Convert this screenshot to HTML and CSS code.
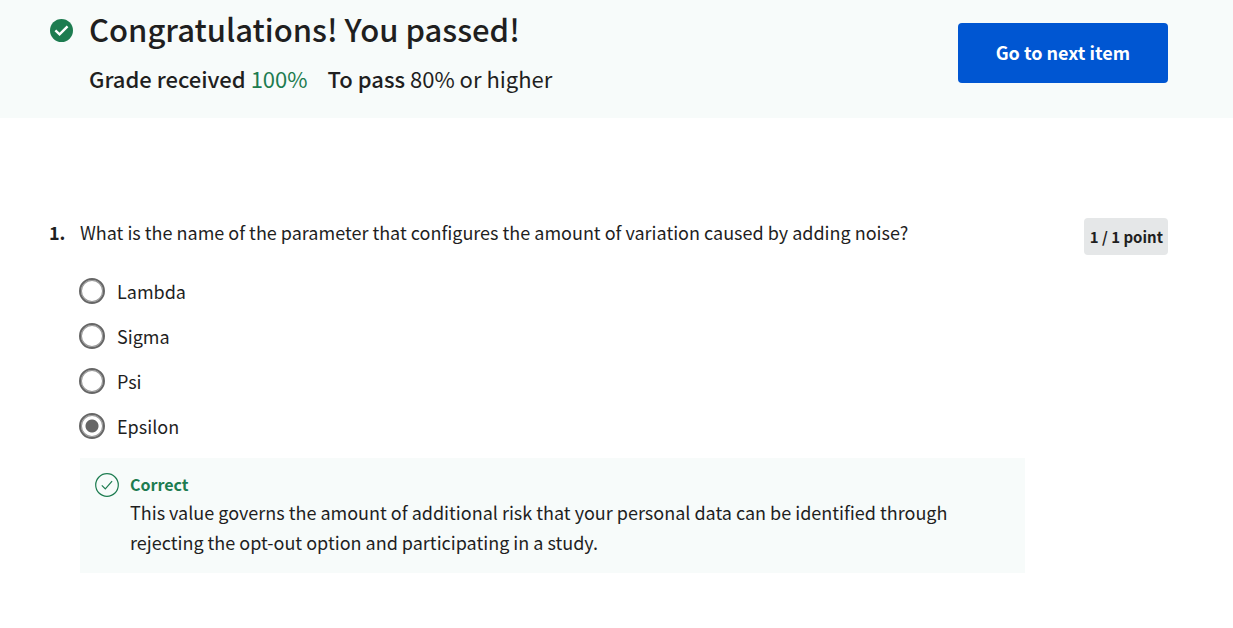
FILE: index.html
```html
<!DOCTYPE html>
<html lang="en">
<head>
<meta charset="utf-8">
<title>Quiz result</title>
<link rel="stylesheet" href="styles.css">
</head>
<body>
<header class="result">
  <svg class="result-icon" viewBox="0 0 24 24" aria-hidden="true"><circle cx="12" cy="12" r="12" fill="#1d7c50"/><path d="M5.6 11.8l4.4 4.3 8.3-8.4" fill="none" stroke="#fff" stroke-width="2.5"/></svg>
  <div class="result-text">
    <h1 class="result-title">Congratulations! You passed!</h1>
    <p class="result-grades">
      <span><strong>Grade received</strong> <span class="grade">100%</span></span>
      <span><strong>To pass</strong> 80% or higher</span>
    </p>
  </div>
  <button class="next" type="button">Go to next item</button>
</header>
<main class="quiz">
  <span class="number">1.</span>
  <fieldset class="question">
    <legend class="prompt">What is the name of the parameter that configures the amount of variation caused by adding noise?</legend>
    <div class="options">
      <label class="option"><input class="radio" type="radio" name="answer">Lambda</label>
      <label class="option"><input class="radio" type="radio" name="answer">Sigma</label>
      <label class="option"><input class="radio" type="radio" name="answer">Psi</label>
      <label class="option"><input class="radio" type="radio" name="answer" checked>Epsilon</label>
    </div>
    <div class="feedback">
      <svg class="feedback-icon" viewBox="0 0 24 24" aria-hidden="true"><circle cx="12" cy="12" r="11.3" fill="none" stroke="#1d7c50" stroke-width="1.2"/><path d="M6.8 12.3l3.5 3.5 6.8-7.6" fill="none" stroke="#1d7c50" stroke-width="1.2"/></svg>
      <div>
        <h2 class="feedback-title">Correct</h2>
        <p class="feedback-text">This value governs the amount of additional risk that your personal data can be identified through rejecting the opt-out option and participating in a study.</p>
      </div>
    </div>
  </fieldset>
  <span class="points">1 / 1 point</span>
</main>
</body>
</html>
```
FILE: styles.css
```css
* { box-sizing: border-box; }
body {
  margin: 0;
  background: #fff;
  color: #1f1f1f;
  font-family: "Noto Sans CJK SC", "Noto Sans", sans-serif;
  font-size: 18px;
  line-height: 30px;
}
h1, h2, p { margin: 0; }
.result {
  display: flex;
  align-items: flex-start;
  padding: 6px 65px 22px 50px;
  background: #f7fbfa;
}
.result-icon { width: 23px; height: 23px; margin-top: 13px; flex: none; }
.result-text { flex: 1; padding-left: 16px; }
.result-title { font-size: 31px; font-weight: 500; line-height: 46px; }
.result-grades {
  display: flex;
  flex-wrap: wrap;
  gap: 20px;
  padding-top: 8px;
  font-size: 22px;
  line-height: 36px;
}
.result-grades strong { font-weight: 500; }
.grade { color: #1d7c50; }
.next {
  margin-top: 17px;
  padding: 14px 38px 16px;
  border: 0;
  border-radius: 4px;
  background: #0056d2;
  color: #fff;
  font: inherit;
  font-weight: 700;
}
.quiz {
  display: flex;
  align-items: flex-start;
  padding: 99px 65px 54px 49px;
}
.number { width: 31px; flex: none; font-weight: 700; }
.question { flex: 1; min-width: 0; margin: 0; padding: 0; border: 0; }
.prompt { padding: 0; }
.options { display: grid; gap: 15px; padding-top: 29px; }
.option { display: flex; align-items: center; gap: 12px; }
.radio {
  appearance: none;
  width: 26px;
  height: 26px;
  margin: 0 0 0 -1px;
  border: 2px solid #666;
  border-radius: 50%;
  box-shadow: inset 0 0 0 1px #999;
}
.radio:checked { background: radial-gradient(circle, #666 6px, transparent 7px); }
.feedback {
  display: flex;
  gap: 11px;
  margin-top: 17px;
  padding: 14px 15px 16px;
  background: #f7fbfa;
}
.feedback-icon { width: 24px; height: 24px; margin-top: 1px; flex: none; }
.feedback-title { color: #1d7c50; font-size: 16px; font-weight: 700; line-height: 25px; }
.points {
  margin: 1px 0 0 59px;
  padding: 4px 5px 3px 6px;
  border-radius: 4px;
  background: #e5e7e8;
  font-size: 15px;
  font-weight: 700;
}
```
